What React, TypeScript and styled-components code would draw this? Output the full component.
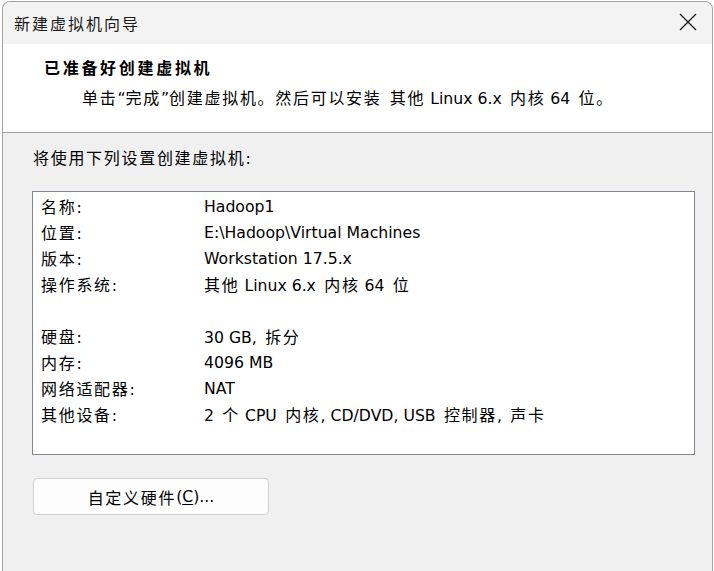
import React from "react";
import styled, { createGlobalStyle } from "styled-components";

const Global = createGlobalStyle`
  html, body { margin: 0; padding: 0; background: #ffffff; }
  body { width: 714px; height: 571px; overflow: hidden; font-family: "DejaVu Sans", "Noto Sans CJK SC", sans-serif; }
`;

const Window = styled.div`
  box-sizing: border-box;
  margin: 1px 0 0 2px;
  width: 711px;
  height: 570px;
  border: 1px solid #a3a3a3;
  border-bottom: none;
  border-radius: 8px 8px 0 0;
  overflow: hidden;
  background: #f0f0f0;
  display: flex;
  flex-direction: column;
`;

const TitleBar = styled.div`
  height: 42px;
  flex: none;
  background: #f3f3f3;
  display: flex;
  align-items: center;
  justify-content: space-between;
  padding: 0 15px 0 11px;
`;

const TitleText = styled.span`
  font-family: "Noto Sans CJK SC", sans-serif;
  font-size: 16px;
  letter-spacing: 2px;
  color: #1a1a1a;
  line-height: 24px;
`;

const CloseButton = styled.div`
  width: 18px;
  height: 18px;
  margin-top: -2px;
  display: flex;
  align-items: center;
  justify-content: center;
`;

const Header = styled.div`
  flex: none;
  height: 89px;
  box-sizing: border-box;
  background: #ffffff;
  border-bottom: 1px solid #a0a0a0;
  padding: 11px 0 0 41px;
  display: flex;
  flex-direction: column;
  gap: 4px;
`;

const HeaderTitle = styled.div`
  font-weight: 700;
  font-size: 15.7px;
  line-height: 24px;
  color: #000;
`;

const HeaderSub = styled.div`
  padding-left: 38px;
  font-size: 15.7px;
  line-height: 24px;
  color: #000;
`;

const Body = styled.div`
  flex: 1;
  padding: 12px 0 0 29px;
  display: flex;
  flex-direction: column;
  align-items: flex-start;
`;

const Lead = styled.div`
  padding-left: 1px;
  font-size: 15.7px;
  line-height: 24px;
  color: #000;
`;

const SummaryBox = styled.div`
  margin-top: 20px;
  box-sizing: border-box;
  width: 663px;
  height: 264px;
  background: #ffffff;
  border: 1px solid #82878f;
  padding: 2px 0 0 8px;
  display: grid;
  grid-template-columns: 163px 1fr;
  grid-auto-rows: 26px;
  align-items: center;
`;

const Cell = styled.div`
  font-size: 15.7px;
  line-height: 26px;
  color: #000;
  white-space: nowrap;
`;

const Spacer = styled.div`
  grid-column: 1 / span 2;
`;

const CustomButton = styled.button`
  margin: 23px 0 0 1px;
  width: 236px;
  height: 37px;
  box-sizing: border-box;
  background: #fdfdfd;
  border: 1px solid #d0d0d0;
  border-radius: 4px;
  font-family: "DejaVu Sans", "Noto Sans CJK SC", sans-serif;
  font-size: 15.7px;
  color: #000;
  padding: 0;
  display: flex;
  align-items: center;
  justify-content: center;
`;

const Han = styled.span<{ $bold?: boolean }>`
  font-family: "Noto Sans CJK SC", sans-serif;
  font-size: 16px;
  letter-spacing: ${(p) => (p.$bold ? "2.7px" : "1.7px")};
  word-spacing: 3px;
`;

const Mnemonic = styled.span`
  text-decoration: underline;
  text-underline-offset: 2px;
`;

const HAN_RE = /( ?[\u3000-\u303f\u4e00-\u9fff\uff00-\uffef]+)/;

function T({ text, bold }: { text: string; bold?: boolean }) {
  const parts = text.split(HAN_RE);
  return (
    <>
      {parts.map((p, i) =>
        i % 2 === 1 ? (
          <Han key={i} $bold={bold}>
            {p}
          </Han>
        ) : (
          <React.Fragment key={i}>{p}</React.Fragment>
        )
      )}
    </>
  );
}

const rows: ([string, string] | null)[] = [
  ["名称:", "Hadoop1"],
  ["位置:", "E:\\Hadoop\\Virtual Machines"],
  ["版本:", "Workstation 17.5.x"],
  ["操作系统:", "其他 Linux 6.x 内核 64 位"],
  null,
  ["硬盘:", "30 GB, 拆分"],
  ["内存:", "4096 MB"],
  ["网络适配器:", "NAT"],
  ["其他设备:", "2 个 CPU 内核, CD/DVD, USB 控制器, 声卡"],
];

export default function App() {
  return (
    <>
      <Global />
      <Window>
        <TitleBar>
          <TitleText>新建虚拟机向导</TitleText>
          <CloseButton>
            <svg width="18" height="18" viewBox="0 0 18 18">
              <path d="M1 1 L17 17 M17 1 L1 17" stroke="#1a1a1a" strokeWidth="1.3" fill="none" />
            </svg>
          </CloseButton>
        </TitleBar>
        <Header>
          <HeaderTitle>
            <T text="已准备好创建虚拟机" bold />
          </HeaderTitle>
          <HeaderSub>
            <T text="单击“完成”创建虚拟机。然后可以安装 其他 Linux 6.x 内核 64 位。" />
          </HeaderSub>
        </Header>
        <Body>
          <Lead>
            <T text="将使用下列设置创建虚拟机:" />
          </Lead>
          <SummaryBox>
            {rows.map((r, i) =>
              r ? (
                <React.Fragment key={i}>
                  <Cell>
                    <T text={r[0]} />
                  </Cell>
                  <Cell>
                    <T text={r[1]} />
                  </Cell>
                </React.Fragment>
              ) : (
                <Spacer key={i} />
              )
            )}
          </SummaryBox>
          <CustomButton>
            <T text="自定义硬件" />(<Mnemonic>C</Mnemonic>)...
          </CustomButton>
        </Body>
      </Window>
    </>
  );
}
